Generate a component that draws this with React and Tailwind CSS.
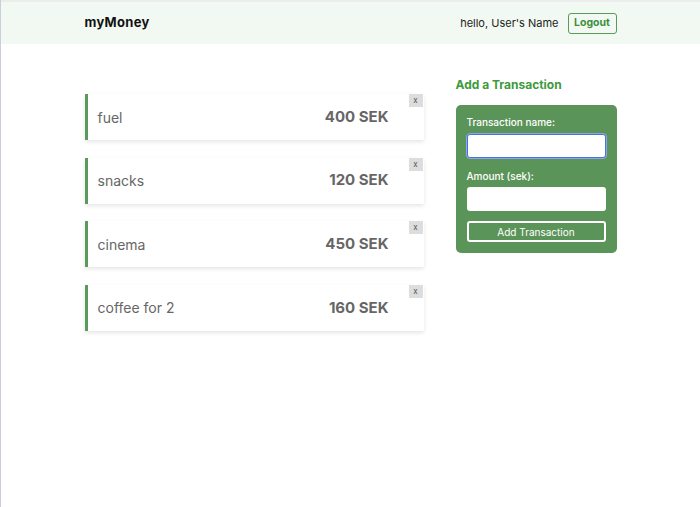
import React from 'react';

const transactions = [
    { id: 1, name: 'fuel', amount: 400 },
    { id: 2, name: 'snacks', amount: 120 },
    { id: 3, name: 'cinema', amount: 450 },
    { id: 4, name: 'coffee for 2', amount: 160 },
];

const font = { fontFamily: 'Inter, "Noto Sans", sans-serif' };

const Navbar = () => (
    <nav className="bg-[#f2f9f2] border-t-2 border-[#ececec] h-[44px]">
        <div className="w-[532px] mx-auto h-full flex items-center justify-between">
            <span className="text-[13px] font-bold text-[#111] tracking-[0.3px]">myMoney</span>
            <div className="flex items-center gap-[9px]">
                <span className="text-[11px] text-[#222]">hello, User's Name</span>
                <button className="h-[21px] w-[49px] border border-[#5a9a5a] rounded-[3px] text-[10.5px] font-bold text-[#3d8f3d]">
                    Logout
                </button>
            </div>
        </div>
    </nav>
);

const TransactionList = ({ items }) => (
    <ul className="w-[339px] flex flex-col gap-[17.67px] pt-[50px]">
        {items.map(t => (
            <li
                key={t.id}
                className="relative h-[46px] bg-white border-l-[3px] border-[#5a9a5a] shadow-[0_2px_4px_rgba(0,0,0,0.1)] flex items-center justify-between pl-[10px] pr-[35px]"
            >
                <span className="text-[14px] text-[#666]">{t.name}</span>
                <span className="text-[15px] font-bold text-[#666]">{t.amount} SEK</span>
                <button className="absolute top-0 right-[1px] w-[14px] h-[13px] bg-[#ddd] text-[8px] leading-[13px] text-[#555] text-center">
                    x
                </button>
            </li>
        ))}
    </ul>
);

const TransactionForm = () => (
    <div className="w-[161px] pt-[33px]">
        <h3 className="text-[12px] leading-[16px] font-bold text-[#3d9a3d] mb-[12px]">Add a Transaction</h3>
        <form className="bg-[#5b9459] rounded-[5px] px-[11px] pt-[11px] pb-[11px]">
            <label className="block text-[10px] leading-[12px] font-medium text-white mb-[6px]">Transaction name:</label>
            <input
                type="text"
                className="block w-full h-[24px] bg-white rounded-[3px] border border-[#4b72d8] outline outline-1 outline-[#8aa6ee] px-[4px] text-[11px]"
            />
            <label className="block text-[10px] leading-[12px] font-medium text-white mt-[12px] mb-[5px]">Amount (sek):</label>
            <input type="number" className="block w-full h-[24px] bg-white rounded-[3px] px-[4px] text-[11px] outline-none" />
            <button
                type="button"
                className="block w-full h-[21px] mt-[10px] border-2 border-white rounded-[3px] text-[10px] leading-none text-white"
            >
                Add Transaction
            </button>
        </form>
    </div>
);

export default function App() {
    return (
        <div className="w-[700px] h-[507px] bg-white border-l border-[#c9ced8] overflow-hidden" style={font}>
            <Navbar />
            <div className="w-[532px] mx-auto flex justify-between">
                <TransactionList items={transactions} />
                <TransactionForm />
            </div>
        </div>
    );
}
